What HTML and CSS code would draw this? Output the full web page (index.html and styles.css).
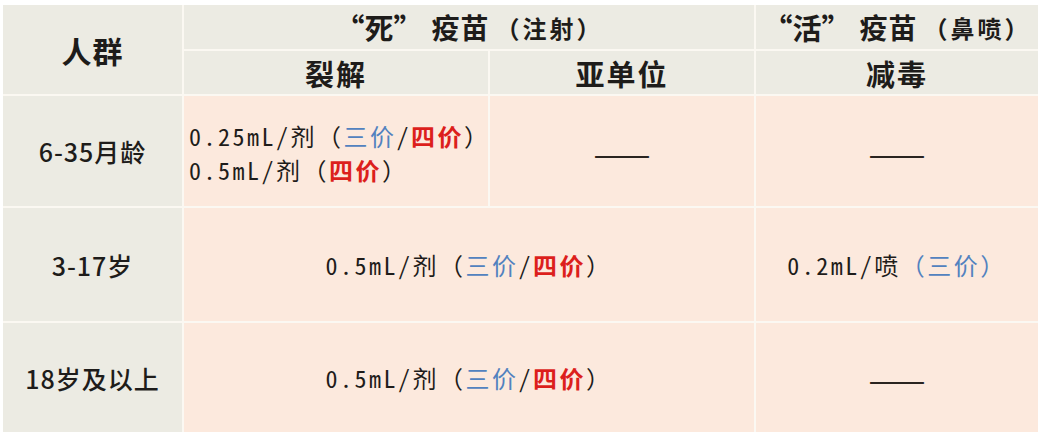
FILE: index.html
```html
<!DOCTYPE html>
<html lang="zh-CN">
<head>
<meta charset="utf-8">
<title>流感疫苗剂量</title>
<link rel="stylesheet" href="styles.css">
</head>
<body>
<div class="sheet">
  <div class="grid">
    <div class="cell head group-col">人群</div>
    <div class="cell head span-23"><span class="q">“</span><span class="key">死</span><span class="q">”</span><span class="name">疫苗</span><span class="note">（注射）</span></div>
    <div class="cell head"><span class="q">“</span><span class="key">活</span><span class="q">”</span><span class="name">疫苗</span><span class="note">（鼻喷）</span></div>
    <div class="cell head sub">裂解</div>
    <div class="cell head sub">亚单位</div>
    <div class="cell head sub">减毒</div>

    <div class="cell age">6-35月龄</div>
    <div class="cell body left dose">
      <div>0.25mL/剂（<span class="tri">三价</span>/<span class="quad">四价</span>）</div>
      <div>0.5mL/剂（<span class="quad">四价</span>）</div>
    </div>
    <div class="cell body"><span class="dash">——</span></div>
    <div class="cell body"><span class="dash">——</span></div>

    <div class="cell age">3-17岁</div>
    <div class="cell body span-23 dose">0.5mL/剂（<span class="tri">三价</span>/<span class="quad">四价</span>）</div>
    <div class="cell body dose">0.2mL/喷<span class="tri">（三价）</span></div>

    <div class="cell age">18岁及以上</div>
    <div class="cell body span-23 dose">0.5mL/剂（<span class="tri">三价</span>/<span class="quad">四价</span>）</div>
    <div class="cell body"><span class="dash">——</span></div>
  </div>
</div>
</body>
</html>
```
FILE: styles.css
```css
html, body {
  margin: 0;
  padding: 0;
  background: #ffffff;
}
.sheet {
  padding: 5px 7px 4px 3px;
}
.grid {
  display: grid;
  grid-template-columns: 179px 304px 264px 282px;
  grid-template-rows: 44px 43px 110px 113px 109px;
  gap: 2px;
  background: #fbf8f2;
  font-family: "Noto Sans CJK SC", "Noto Sans", sans-serif;
  color: #1e1c1a;
}
.cell {
  display: flex;
  align-items: center;
  justify-content: center;
  white-space: nowrap;
}
.head {
  background: #ecebe3;
  font-size: 28px;
  font-weight: 600;
  letter-spacing: 1px;
}
.head.sub {
  font-size: 29px;
  letter-spacing: 2px;
}
.q {
  display: inline-block;
  width: 30px;
  text-align: center;
  font-size: 30px;
  letter-spacing: 0;
}
.key {
  letter-spacing: 0;
  font-size: 29px;
}
.name {
  margin-left: 8px;
}
.group-col {
  grid-row: span 2;
  font-size: 30px;
}
.span-23 {
  grid-column: span 2;
}
.note {
  font-size: 24px;
  letter-spacing: 3px;
  margin-left: 6px;
}
.age {
  background: #ecebe3;
  font-size: 25px;
  font-weight: 500;
  letter-spacing: 1px;
}
.body {
  background: #fce9dd;
}
.dose {
  font-family: "Noto Sans Mono CJK SC", "Noto Sans CJK SC", monospace;
  font-size: 24px;
  letter-spacing: 2.5px;
}
.left {
  flex-direction: column;
  align-items: flex-start;
  justify-content: center;
  padding-left: 5px;
  line-height: 34px;
  padding-top: 4px;
}
.tri {
  color: #5282bf;
}
.quad {
  color: #dc1f1c;
  font-weight: 700;
}
.dash {
  font-size: 34px;
  color: #2a2420;
  letter-spacing: 0;
  padding-top: 2px;
}
```
